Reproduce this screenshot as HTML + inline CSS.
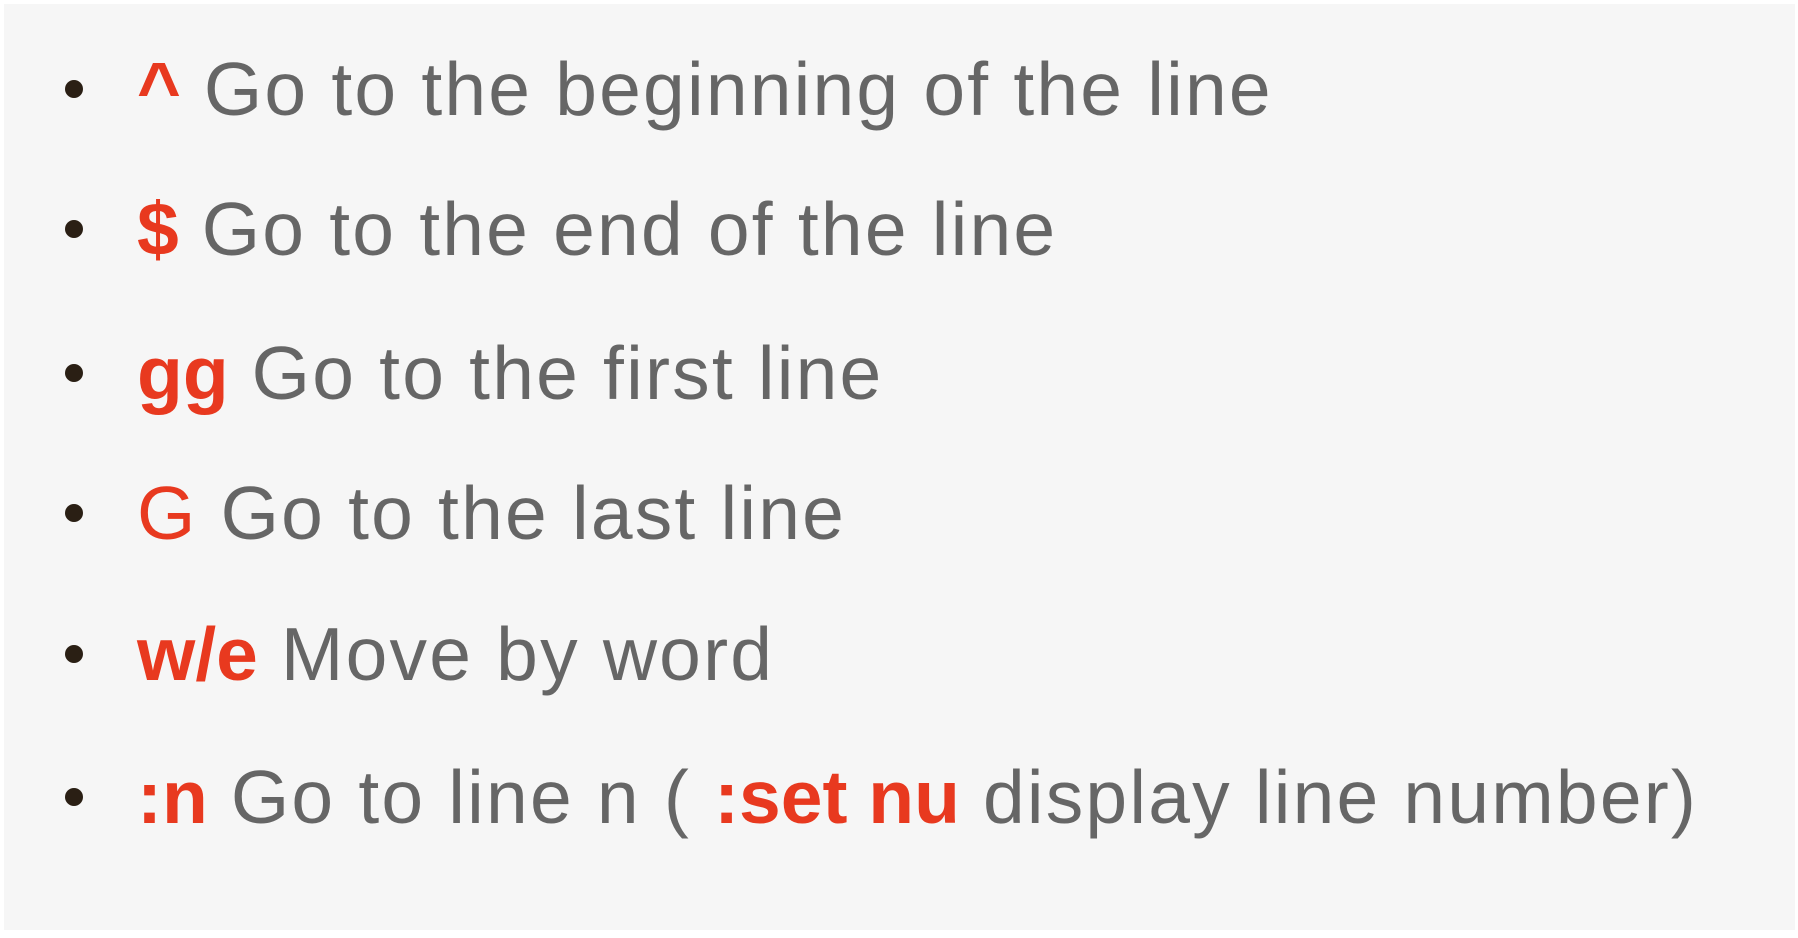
<!DOCTYPE html>
<html><head><meta charset="utf-8"><style>
html,body{margin:0;padding:0;background:#fff;}
body{width:1798px;height:938px;overflow:hidden;position:relative;font-family:"Liberation Sans",sans-serif;}
.panel{position:absolute;left:4px;top:4px;width:1791px;height:926px;background:#f6f6f6;}
.row{position:absolute;left:0;height:100px;white-space:nowrap;font-size:75px;color:#666;line-height:100px;}
.dot{position:absolute;left:65px;top:41px;width:18px;height:18px;border-radius:50%;background:#2a1f14;}
.txt{position:absolute;left:137px;top:0;letter-spacing:2.2px;}
.r{color:#e8391f;font-weight:bold;letter-spacing:0;}
.rn{color:#e8391f;}
</style></head><body>
<div class="panel"></div>
<div class="row" style="top:39px"><div class="dot"></div><div class="txt"><span class="r">^</span> Go to the beginning of the line</div></div>
<div class="row" style="top:179px"><div class="dot"></div><div class="txt"><span class="r">$</span> Go to the end of the line</div></div>
<div class="row" style="top:323px"><div class="dot"></div><div class="txt"><span class="r">gg</span> Go to the first line</div></div>
<div class="row" style="top:463px"><div class="dot"></div><div class="txt"><span class="rn">G</span> Go to the last line</div></div>
<div class="row" style="top:604px"><div class="dot"></div><div class="txt"><span class="r">w/e</span> Move by word</div></div>
<div class="row" style="top:747px"><div class="dot"></div><div class="txt"><span class="r">:n</span> Go to line n ( <span class="r">:set nu</span> display line number)</div></div>
</body></html>
